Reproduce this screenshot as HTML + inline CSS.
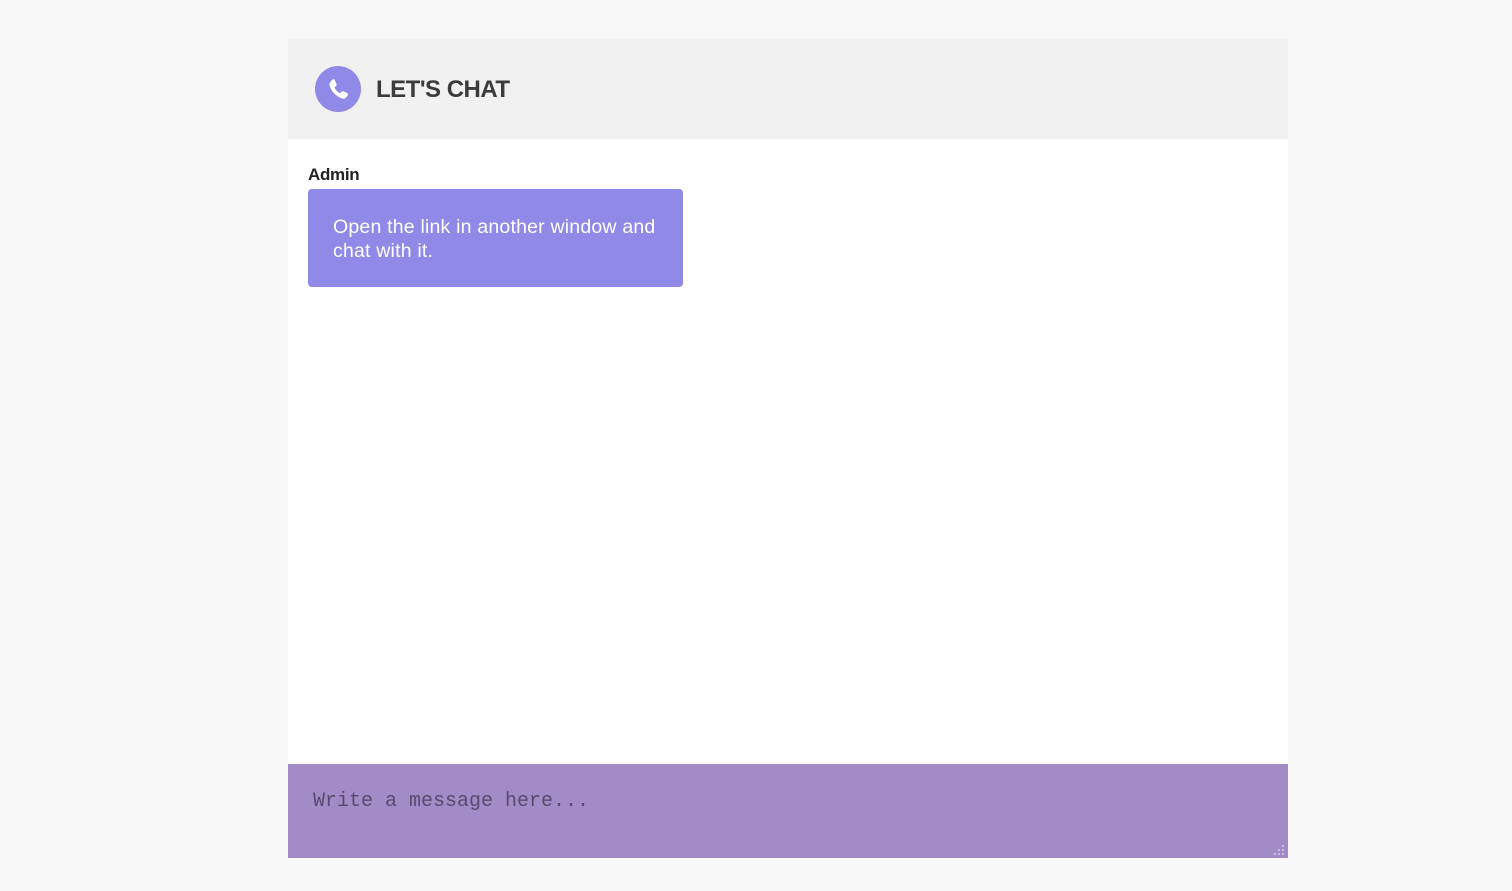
<!DOCTYPE html>
<html><head><meta charset="utf-8"><style>
html,body{margin:0;padding:0;background:#f8f8f8;width:1512px;height:891px;overflow:hidden;font-family:"Liberation Sans",sans-serif}
.box{position:absolute;left:288px;top:39px;width:1000px;height:819px;background:#fff}
.hd{position:absolute;left:0;top:0;width:1000px;height:100px;background:#f1f1f1}
.ic{position:absolute;left:27px;top:27px;width:46px;height:46px;border-radius:50%;background:#8f89e8}
.ttl{position:absolute;left:88px;top:37px;font-size:24px;font-weight:bold;color:#3b3b3b;letter-spacing:-0.5px}
.nm{position:absolute;left:20px;top:126px;font-size:17px;font-weight:bold;color:#222;letter-spacing:-0.3px}
.msg{position:absolute;left:20px;top:150px;width:375px;height:98px;background:#8f89e8;border-radius:4px;color:#fff;font-size:19.5px;line-height:24px;box-sizing:border-box;padding:26px 25px;letter-spacing:0.2px}
.in{position:absolute;left:0;top:725px;width:1000px;height:94px;background:#a38bc7}
.ph{position:absolute;left:25px;top:26px;font-family:"Liberation Mono",monospace;font-size:20px;color:#5a4a6e}
.grip{position:absolute;right:3px;bottom:2px}
</style></head><body>
<div class="box">
<div class="hd"><div class="ic"><svg width="46" height="46" viewBox="0 0 46 46"><path d="M17 14c1-1 2.5-1 3 .5l1.5 3.5c.4 1-.2 2-1 2.6l-1 .8c1 2.5 3 4.6 5.5 5.8l.9-1c.7-.8 1.7-1.2 2.7-.8l3.3 1.5c1.3.6 1.4 2 .5 3l-1.4 1.6c-1 1.1-2.6 1.5-4 1-6-2.2-10.4-6.7-12.4-12.7-.5-1.4 0-2.9 1-3.9z" fill="#fff"/></svg></div><div class="ttl">LET'S CHAT</div></div>
<div class="nm">Admin</div>
<div class="msg">Open the link in another window and chat with it.</div>
<div class="in"><div class="ph">Write a message here...</div>
<svg class="grip" width="11" height="11" viewBox="0 0 11 11" fill="#c9bde0"><rect x="8" y="0" width="2" height="2"/><rect x="4" y="4" width="2" height="2"/><rect x="8" y="4" width="2" height="2"/><rect x="0" y="8" width="2" height="2"/><rect x="4" y="8" width="2" height="2"/><rect x="8" y="8" width="2" height="2"/></svg></div>
</div>
</body></html>
